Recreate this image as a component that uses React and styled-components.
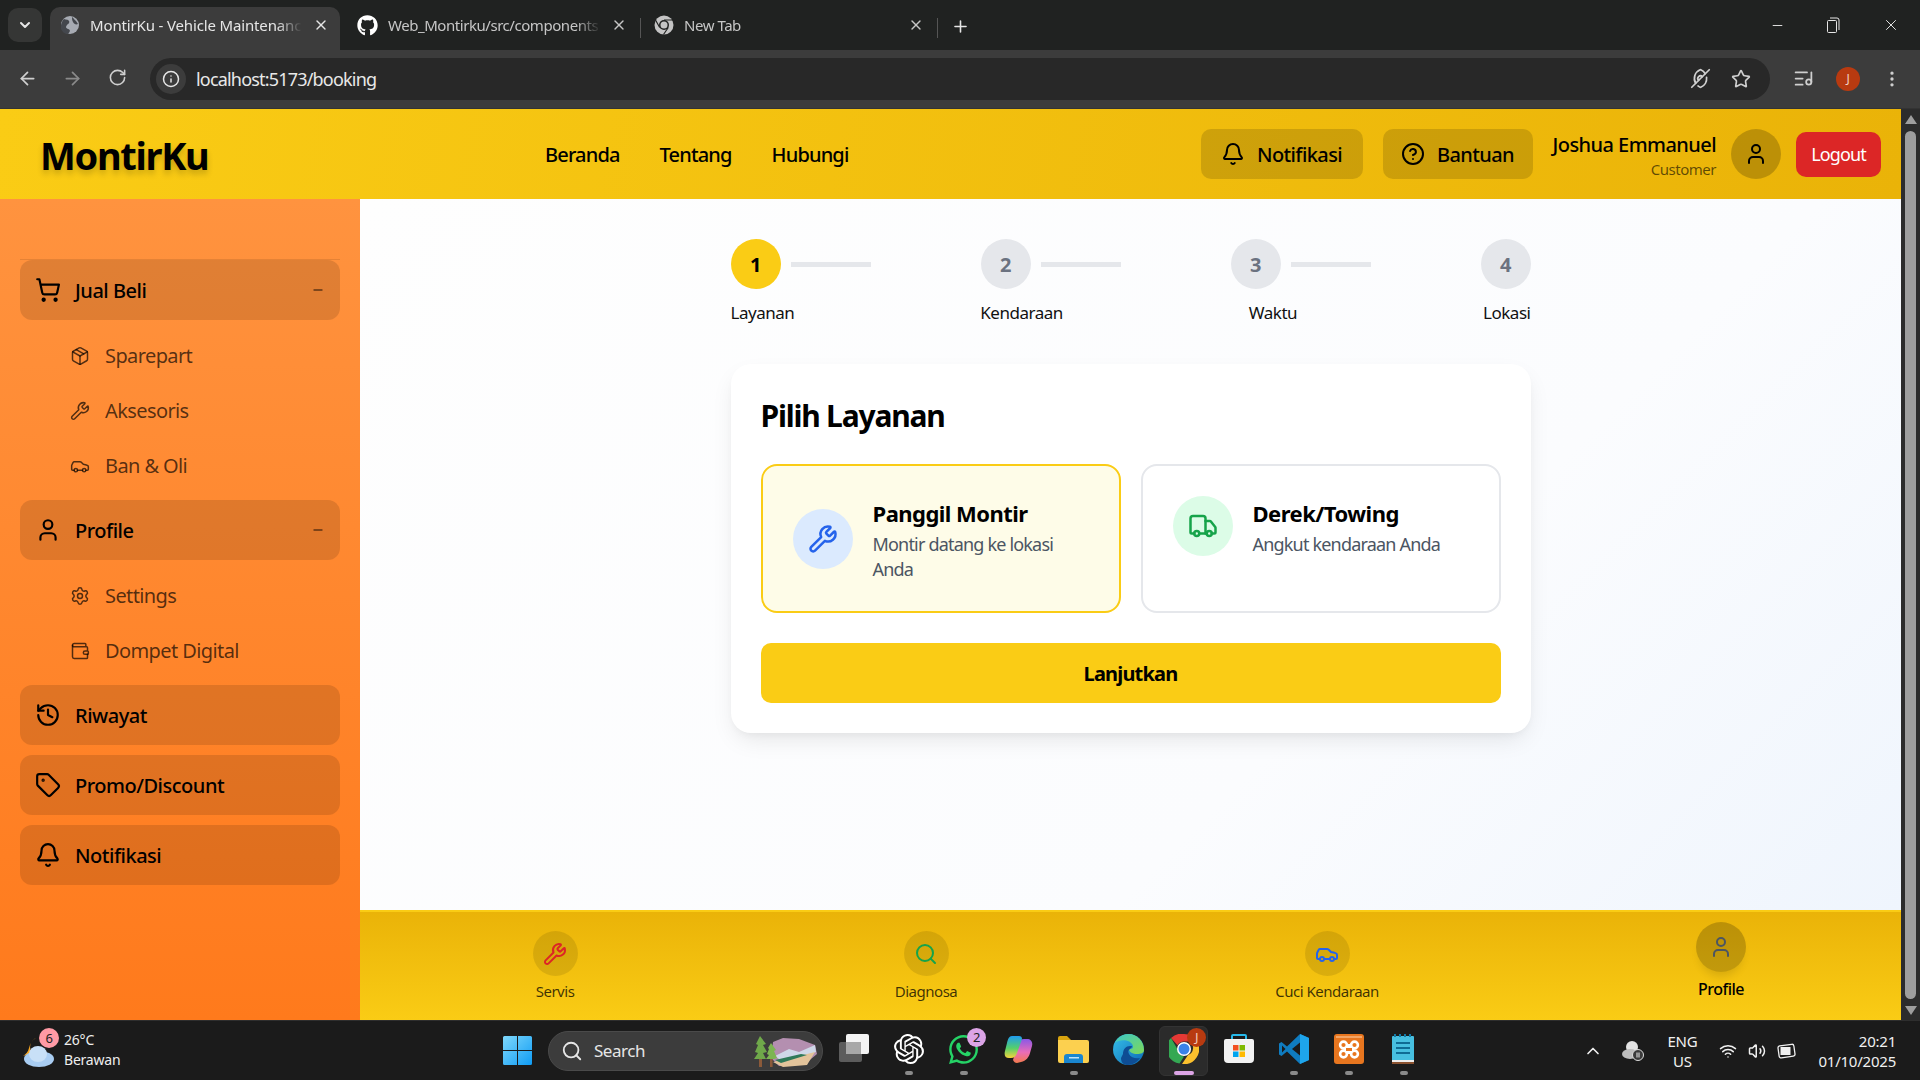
import React from "react";
import styled, { createGlobalStyle } from "styled-components";
import {
  ArrowLeft, ArrowRight, RotateCw, Info, Star, ChevronDown, X, Plus, Minus, EllipsisVertical, ListMusic, EyeOff,
  Bell, CircleHelp, User, ShoppingCart, Package, Wrench, Car, Settings, Wallet, History, Tag, Truck, Search, ChevronUp, Wifi, Volume2,
} from "lucide-react";
import { FaGithub, FaWhatsapp } from "react-icons/fa";
import { SiOpenai } from "react-icons/si";

const FONT = `"Noto Sans", "Open Sans", "Liberation Sans", sans-serif`;

const Global = createGlobalStyle`
  html, body { margin: 0; padding: 0; background: #1c1c1c; overflow: hidden; }
  * { box-sizing: border-box; }
  body { font-family: ${FONT}; }
`;

const Screen = styled.div`
  width: 1920px; height: 1080px; display: flex; flex-direction: column; overflow: hidden; letter-spacing: -0.03em;
`;

/* ---------- browser chrome ---------- */
const TabStrip = styled.div`
  height: 50px; background: #202221; display: flex; align-items: flex-end; padding-left: 8px; position: relative; flex: none;
`;
const TabSearch = styled.div`
  width: 34px; height: 34px; margin-bottom: 8px; border-radius: 10px; background: #353635; color: #e6e6e6;
  display: flex; align-items: center; justify-content: center; margin-right: 8px; flex: none;
`;
const Tab = styled.div`
  width: 290px; height: 43px; padding: 0 11px 7px ${p => (p.$active ? 11 : 9)}px; display: flex; align-items: center; gap: ${p => (p.$active ? 11 : 10)}px; flex: none;
  color: ${p => (p.$active ? "#e6e6e6" : "#c6c6c6")};
  background: ${p => (p.$active ? "#3c3c3c" : "transparent")};
  letter-spacing: ${p => (p.$active ? "-0.01em" : "-0.03em")};
  border-radius: 10px 10px 0 0; font-size: 15px; margin-right: 8px;
`;
const TabTitle = styled.span`
  flex: 1; overflow: hidden; white-space: nowrap;
  mask-image: linear-gradient(to right, #000 88%, transparent 100%);
`;
const TabSep = styled.div`width: 1px; height: 20px; background: #555; margin: 0 4px 12px -6px; flex: none;`;
const NewTab = styled.div`margin: 0 0 14px 9px; color: #e6e6e6; display: flex; flex: none;`;
const WindowControls = styled.div`
  margin-left: auto; display: flex; align-items: center; color: #e6e6e6; height: 50px; flex: none; padding-right: 20px; gap: 42px; align-self: flex-start;
`;
const Toolbar = styled.div`
  height: 59px; background: #3c3c3c; display: flex; align-items: center; flex: none; border-bottom: 1px solid #333; padding-bottom: 1px;
`;
const NavBtn = styled.div`
  width: 45px; display: flex; justify-content: center; color: ${p => (p.$dim ? "#8a8a8a" : "#cfcfcf")}; flex: none;
`;
const NavBtns = styled.div`display: flex; padding-left: 5px; width: 150px; flex: none;`;
const AddressBar = styled.div`
  width: 1620px; height: 42px; background: #282828; border-radius: 21px; display: flex; align-items: center; padding: 0 12px 0 6px; flex: none;
`;
const InfoChip = styled.div`
  width: 30px; height: 30px; border-radius: 50%; background: #3c3c3c; color: #e6e6e6; display: flex; align-items: center; justify-content: center; margin-right: 10px;
`;
const Url = styled.span`color: #e8e8e8; font-size: 18px; letter-spacing: -0.045em;`;
const AddrIcons = styled.div`margin-left: auto; display: flex; gap: 20px; color: #cfcfcf; align-items: center; padding-right: 7px;`;
const PrivacyIcon = styled(EyeOff)`transform: rotate(90deg);`;
const ToolRight = styled.div`flex: 1; display: flex; align-items: center; color: #cfcfcf; padding-left: 23px; gap: 22px;`;
const ProfileChip = styled.div`
  width: 24px; height: 24px; border-radius: 50%; background: #b83a10; color: #f3d5c8; font-size: 12px; display: flex; align-items: center; justify-content: center;
`;

/* ---------- page ---------- */
const PageRow = styled.div`flex: 1; display: flex; min-height: 0;`;
const Viewport = styled.div`flex: 1; display: flex; flex-direction: column; min-width: 0;`;
const Scrollbar = styled.div`
  width: 19px; background: #2c2c2c; display: flex; flex-direction: column; align-items: center; padding: 6px 0 5px; flex: none;
`;
const ScrollThumb = styled.div`flex: 1; width: 11px; border-radius: 6px; background: #9e9e9e; margin: 7px 0;`;
const ScrollArrow = styled.div`
  width: 0; height: 0; border-left: 6px solid transparent; border-right: 6px solid transparent;
  ${p => (p.$down ? "border-top: 9px solid #9e9e9e;" : "border-bottom: 9px solid #9e9e9e;")}
`;
const Header = styled.header`
  height: 90px; flex: none; background: linear-gradient(100deg, #facc15, #eab308); display: flex; align-items: center;
  padding: 0 20px 0 40px; color: #000;
`;
const Logo = styled.div`
  width: 505px; font-size: 38px; font-weight: 700; text-shadow: 0 4px 6px rgba(0,0,0,.2); flex: none; letter-spacing: -0.035em; padding-top: 2px;
`;
const TopNav = styled.nav`display: flex; gap: 40px; font-size: 20px; font-weight: 500; letter-spacing: -0.042em;`;
const HeaderRight = styled.div`margin-left: auto; display: flex; align-items: center;`;
const HeaderBtn = styled.div`
  width: ${p => p.$w}px; height: 50px; border-radius: 10px; background: rgba(0,0,0,.14); display: flex; align-items: center; justify-content: center; gap: 12px;
  font-size: 20px; font-weight: 500; margin-right: 20px; letter-spacing: -0.03em;
`;
const UserBox = styled.div`display: flex; flex-direction: column; align-items: flex-end; margin-right: 15px; padding-top: 3px;`;
const UserName = styled.div`font-size: 20px; font-weight: 500; line-height: 27px; letter-spacing: -0.028em;`;
const UserRole = styled.div`font-size: 15px; color: rgba(0,0,0,.6); line-height: 22px;`;
const Avatar = styled.div`
  width: 50px; height: 50px; border-radius: 50%; background: rgba(0,0,0,.2); display: flex; align-items: center; justify-content: center; margin-right: 15px;
`;
const LogoutBtn = styled.div`
  width: 85px; height: 45px; border-radius: 10px; background: #dc2626; color: #fff; font-size: 18px; display: flex; align-items: center; justify-content: center; letter-spacing: -0.05em;
`;
const Body = styled.div`flex: 1; display: flex; min-height: 0;`;
const Sidebar = styled.aside`
  width: 360px; flex: none; background: linear-gradient(180deg, #ff933f, #ff7a1c); padding: 60px 20px 0; color: #000;
`;
const SideList = styled.div`
  border-top: 1px solid rgba(0,0,0,.1); display: flex; flex-direction: column; gap: 10px;
`;
const SideItem = styled.div`
  height: 60px; border-radius: 12px; background: rgba(0,0,0,.12); display: flex; align-items: center; padding: 0 15px; gap: 14px;
  font-size: 20px; font-weight: 500;
`;
const SideLabel = styled.span`flex: 1;`;
const SubList = styled.div`padding-top: 8px; margin-bottom: -3px;`;
const SubItem = styled.div`
  height: 55px; padding-left: 50px; display: flex; align-items: center; gap: 15px; font-size: 20px; color: rgba(0,0,0,.68);
  letter-spacing: -0.03em;
`;
const MainCol = styled.div`flex: 1; display: flex; flex-direction: column; min-width: 0;`;
const Content = styled.main`
  flex: 1; background: linear-gradient(135deg, #fefefe 0%, #fbfcfe 65%, #eff5fd 100%); padding: 40px 0 0; display: flex; flex-direction: column; align-items: center;
`;
const Wizard = styled.div`width: 800px;`;
const Steps = styled.div`display: flex; justify-content: space-between;`;
const Step = styled.div`display: flex; align-items: center; gap: 10px;`;
const StepDot = styled.div`
  width: 50px; height: 50px; border-radius: 50%; font-size: 20px; font-weight: 700; display: flex; align-items: center; justify-content: center;
  background: ${p => (p.$active ? "#facc15" : "#e5e7eb")}; color: ${p => (p.$active ? "#000" : "#6b7280")};
`;
const StepLine = styled.div`width: 80px; height: 5px; background: #e5e7eb;`;
const StepLabels = styled.div`display: flex; justify-content: space-between; margin-top: 11px; font-size: 17px; color: #111; line-height: 25px; margin-bottom: 39px;`;
const Card = styled.section`
  background: #fff; border-radius: 20px; padding: 30px; box-shadow: 0 10px 25px -5px rgba(0,0,0,.1), 0 4px 10px -4px rgba(0,0,0,.06);
`;
const CardTitle = styled.h2`margin: 0 0 26px; font-size: 30px; line-height: 44px; font-weight: 700; color: #000; letter-spacing: -0.04em;`;
const Options = styled.div`display: grid; grid-template-columns: 1fr 1fr; gap: 20px;`;
const Option = styled.div`
  border: 2px solid ${p => (p.$selected ? "#facc15" : "#e5e7eb")}; background: ${p => (p.$selected ? "#fefce8" : "#fff")};
  border-radius: 16px; padding: 30px 30px 29px; display: flex; gap: 20px; align-items: ${p => (p.$selected ? "center" : "flex-start")};
`;
const OptionIcon = styled.div`
  width: 60px; height: 60px; border-radius: 50%; background: ${p => p.$bg}; color: ${p => p.$fg}; display: flex; align-items: center; justify-content: center; flex: none;
`;
const OptionTitle = styled.div`font-size: 22px; font-weight: 700; line-height: 35px; color: #000; letter-spacing: -0.024em;`;
const OptionDesc = styled.div`font-size: 18px; line-height: 25px; margin-top: 1px; color: #4b5563; max-width: ${p => p.$max || "none"}; letter-spacing: -0.045em;`;
const NextBtn = styled.div`
  margin-top: 30px; height: 60px; border-radius: 10px; background: #facc15; font-size: 20px; font-weight: 700; display: flex; align-items: center; justify-content: center; color: #000; letter-spacing: -0.04em;
`;
const BottomNav = styled.nav`
  height: 110px; flex: none; background: linear-gradient(180deg, #eab308, #facc15); border-top: 2px solid #facc15;
  display: flex; gap: 317px; padding-left: 175px; align-items: flex-start;
`;
const BottomItem = styled.div`
  width: ${p => p.$w}px; display: flex; flex-direction: column; align-items: center; padding-top: ${p => (p.$active ? 10 : 19)}px; flex: none;
`;
const BottomCircle = styled.div`
  width: ${p => (p.$active ? 50 : 45)}px; height: ${p => (p.$active ? 50 : 45)}px; border-radius: 50%;
  background: rgba(0,0,0,${p => (p.$active ? ".2" : ".1")}); color: ${p => p.$fg}; display: flex; align-items: center; justify-content: center; flex: none;
  ${p => p.$active && "box-shadow: 0 8px 10px -4px rgba(0,0,0,.12);"}
`;
const BottomLabel = styled.div`
  margin-top: ${p => (p.$active ? 6 : 4)}px; white-space: nowrap; line-height: 22px;
  font-size: ${p => (p.$active ? 16 : 15)}px; font-weight: ${p => (p.$active ? 500 : 400)}; color: ${p => (p.$active ? "#000" : "rgba(0,0,0,.75)")};
`;

/* ---------- taskbar ---------- */
const Taskbar = styled.footer`
  height: 60px; flex: none; background: #1b1b1b; border-top: 1px solid #2e2e2e; display: flex; align-items: center; color: #fff;
`;
const Weather = styled.div`width: 503px; height: 100%; flex: none; display: flex; align-items: center; padding-left: 22px; position: relative;`;
const WeatherBadge = styled.div`
  position: absolute; left: 39px; top: 7px; width: 20px; height: 20px; border-radius: 50%; background: #ff9aa5; color: #222; font-size: 13px;
  display: flex; align-items: center; justify-content: center;
`;
const WeatherText = styled.div`margin-left: 9px; font-size: 14px; line-height: 20px; color: #eee; letter-spacing: -0.015em; padding-bottom: 1px;`;
const WinIcon = styled.div`width: 45px; flex: none; display: flex;`;
const SearchPill = styled.div`
  width: 275px; height: 40px; border-radius: 20px; background: #3c3c3c; border: 1px solid #4a4a4a; display: flex; align-items: center; padding: 0 3px 0 12px; color: #e6e6e6; font-size: 17px; gap: 11px; flex: none;
`;
const PillArt = styled.div`margin-left: auto; display: flex;`;
const TaskIcons = styled.div`display: flex; margin-left: 3px; flex: none;`;
const TaskIcon = styled.div`
  width: 55px; height: 60px; display: flex; align-items: center; justify-content: center; position: relative; flex: none;
  padding-bottom: 3px;
  &::before {
    ${p => p.$active && `content: ""; position: absolute; left: 3px; right: 3px; top: 5px; bottom: 5px; background: #2b2b2b; border-radius: 6px; border: 1px solid #333;`}
  }
  &::after {
    ${p => p.$running && `content: ""; position: absolute; bottom: 6px; left: 50%; transform: translateX(-50%); border-radius: 2px;
    height: 4px; width: ${p.$active ? 20 : 8}px; background: ${p.$active ? "#dca4e6" : "#8a8a8a"};`}
  }
  > * { position: relative; z-index: 1; }
`;
const IconBadge = styled.div`
  position: absolute; top: 7px; right: ${p => p.$right}px; width: 19px; height: 19px; border-radius: 50%; background: ${p => p.$bg}; color: ${p => p.$fg};
  font-size: 13px; display: flex; align-items: center; justify-content: center; z-index: 2;
`;
const Tray = styled.div`margin-left: auto; display: flex; align-items: center; padding-right: 24px; color: #f0f0f0;`;
const TrayBlock = styled.div`
  display: flex; flex-direction: column; align-items: ${p => p.$align || "center"}; font-size: 15px; line-height: 20px; margin-left: ${p => p.$ml}px; letter-spacing: -0.015em;
`;
const TrayIcons = styled.div`display: flex; align-items: center; gap: 11px; margin-left: ${p => p.$ml}px;`;

const Bars = () => (
  <svg width="29" height="29" viewBox="0 0 29 29">
    <defs><linearGradient id="wn" x1="0" y1="0" x2="1" y2="1"><stop offset="0" stopColor="#7fd8fb" /><stop offset="1" stopColor="#0f9cf5" /></linearGradient></defs>
    <path fill="url(#wn)" d="M0 1.5A1.5 1.5 0 0 1 1.5 0H14v14H0zM15 0h12.5A1.5 1.5 0 0 1 29 1.5V14H15zM0 15h14v14H1.5A1.5 1.5 0 0 1 0 27.5zM15 15h14v12.5a1.5 1.5 0 0 1-1.5 1.5H15z" />
  </svg>
);
const Landscape = () => (
  <svg width="66" height="34" viewBox="0 0 66 34">
    <path d="M20 8 L30 4 L46 5 L62 11 L64 20 L52 30 L26 32 L18 24Z" fill="#b48fb0" />
    <path d="M22 22 L36 15 L46 18 L62 11 L63 18 L50 23 L30 28Z" fill="#cfd8e8" />
    <path d="M20 28 L50 21 L62 18 L54 31 L30 33Z" fill="#e3c49b" />
    <path d="M22 26 L48 20 L54 21 L28 29Z" fill="#2f7a59" />
    <rect x="6" y="6" width="3" height="27" fill="#8b5a3a" /><rect x="17" y="12" width="2.6" height="21" fill="#8b5a3a" />
    <path d="M7 2l6 8-3 1 4 7-4 1 3 6H1l4-6-3-1 3-7-2-1z" fill="#6fa84a" />
    <path d="M18 9l5 7-2 1 3 7-3 1H13l3-4-2-1 2-5-1-1z" fill="#7db552" />
  </svg>
);
const TaskView = () => (
  <svg width="30" height="30" viewBox="0 0 30 30">
    <rect x="0" y="8" width="23" height="20" rx="2" fill="#5c5c5c" />
    <rect x="7" y="0" width="23" height="20" rx="2" fill="#f4f4f4" />
    <rect x="7" y="8" width="15" height="12" fill="#a8a8a8" />
  </svg>
);
const Copilot = () => (
  <svg width="29" height="29" viewBox="0 0 29 29">
    <defs>
      <linearGradient id="c1" x1="0" y1="0" x2="0" y2="1"><stop offset="0" stopColor="#1f9cf0" /><stop offset=".55" stopColor="#55d06a" /><stop offset="1" stopColor="#f5d33c" /></linearGradient>
      <linearGradient id="c2" x1="0" y1="0" x2="0" y2="1"><stop offset="0" stopColor="#8a58e6" /><stop offset=".55" stopColor="#e86db8" /><stop offset="1" stopColor="#f47a4c" /></linearGradient>
    </defs>
    <path fill="url(#c2)" d="M14 9c1-3 3-5 6-5h3c4 0 6 3 5 7l-2 7c-1 4-4 8-9 9l-4 1c-2 0-3-1-4-3z" />
    <path fill="url(#c1)" d="M8 1h7c2 0 3 1 3 3l-5 14c-1 3-3 5-6 5H5c-4 0-5-3-4-7l2-8C4 4 5 1 8 1z" />
  </svg>
);
const Folder = () => (
  <svg width="31" height="28" viewBox="0 0 31 28">
    <path d="M0 3a2 2 0 0 1 2-2h7l4 4v4H0z" fill="#d9a40f" />
    <path d="M0 5h29a2 2 0 0 1 2 2v19a2 2 0 0 1-2 2H2a2 2 0 0 1-2-2z" fill="#fcd04f" />
    <path d="M5 28v-6a3 3 0 0 1 3-3h13a3 3 0 0 1 3 3v6z" fill="#1a86d0" transform="translate(1 0)" />
    <rect x="11" y="22" width="10" height="1.5" fill="#bfe3fa" />
  </svg>
);
const Edge = () => (
  <svg width="31" height="31" viewBox="0 0 31 31">
    <defs>
      <linearGradient id="e1" x1="0" y1="0" x2="1" y2="1"><stop offset="0" stopColor="#37c1ea" /><stop offset="1" stopColor="#0c6ab5" /></linearGradient>
      <linearGradient id="e2" x1="0" y1="0" x2="1" y2="1"><stop offset="0" stopColor="#3cc8c8" /><stop offset="1" stopColor="#7ed957" /></linearGradient>
    </defs>
    <circle cx="15.500" cy="15.500" r="15.500" fill="url(#e1)" />
    <path d="M31 16c0-9-7-16-15.500-16C9 0 4 4 2 9c4-4 16-4 18 3 .5 2-1 3-3 3h-1c0 3 4 5 8 5 4 0 7-1 7-4z" fill="url(#e2)" />
    <path d="M10 20c0-5 3-8 7-8s1 2 0 3c-2 1-2 3-1 5 2 4 7 5 11 4-3 4-7 7-12 7-4 0-7-2-7-7z" fill="#0e4d94" />
  </svg>
);
const Chrome = () => (
  <svg width="30" height="30" viewBox="0 0 30 30">
    <path d="M15 0a15 15 0 0 1 13 7.500H15a7.500 7.500 0 0 0-6.500 3.750L2 3.950A15 15 0 0 1 15 0z" fill="#e53935" />
    <path d="M2 4l6.500 11.250a7.500 7.500 0 0 0 6.500 7.250L10.500 29.500A15 15 0 0 1 2 4z" fill="#34a853" />
    <path d="M28 7.500A15 15 0 0 1 13 30l6-9a7.500 7.500 0 0 0 1.500-13.500z" fill="#fbc02d" />
    <circle cx="15" cy="15" r="7" fill="#fff" />
    <circle cx="15" cy="15" r="5.500" fill="#3b82e8" />
  </svg>
);
const Store = () => (
  <svg width="30" height="30" viewBox="0 0 30 30">
    <path d="M8 6V2a1 1 0 0 1 1-1h12a1 1 0 0 1 1 1v4" fill="none" stroke="#27b9ea" strokeWidth="2" />
    <path d="M0 7a2 2 0 0 1 2-2h26a2 2 0 0 1 2 2v18a4 4 0 0 1-4 4H4a4 4 0 0 1-4-4z" fill="#f2f2f2" />
    <rect x="9" y="11" width="5.500" height="5.500" fill="#f25022" /><rect x="15.500" y="11" width="5.500" height="5.500" fill="#7fba00" />
    <rect x="9" y="17.500" width="5.500" height="5.500" fill="#00a4ef" /><rect x="15.500" y="17.500" width="5.500" height="5.500" fill="#ffb900" />
  </svg>
);
const VSCode = () => (
  <svg width="30" height="30" viewBox="0 0 30 30">
    <path d="M21 0l9 4v22l-9 4-13-12.500L2.500 22 0 20.500V9.500L2.500 8 8 12.500z" fill="#0f7cc0" />
    <path d="M21 0l9 4v22l-9 4z" fill="#1ea5ec" />
    <path d="M21 8.500L13 15l8 6.500z" fill="#1b1b1b" />
    <path d="M3 11.500L6.500 15 3 18.500z" fill="#1b1b1b" />
  </svg>
);
const Xampp = () => (
  <svg width="30" height="30" viewBox="0 0 30 30">
    <rect width="30" height="30" rx="3" fill="#e8761f" />
    <rect x="2" y="2" width="26" height="2" fill="#f3a566" />
    <rect x="10" y="10" width="10" height="10" fill="#fff" />
    <g fill="#e8761f" stroke="#fff" strokeWidth="2.600">
      <circle cx="9.500" cy="11" r="3.400" /><circle cx="20.500" cy="11" r="3.400" />
      <circle cx="9.500" cy="20" r="3.400" /><circle cx="20.500" cy="20" r="3.400" />
    </g>
    <rect x="12" y="14" width="6" height="3" fill="#e8761f" />
  </svg>
);
const Notepad = () => (
  <svg width="24" height="30" viewBox="0 0 24 30">
    <rect x="0" y="2" width="22" height="28" rx="1" fill="#47bfe0" />
    <rect x="0" y="26" width="22" height="2.500" fill="#eee" /><rect x="0" y="28" width="22" height="2" fill="#8a5230" />
    <path d="M2 0h2v3H2zM7 0h2v3H7zM12 0h2v3h-2zM17 0h2v3h-2z" fill="#127aa6" />
    <rect x="4" y="8" width="14" height="2" fill="#0f6b94" /><rect x="4" y="13" width="14" height="2" fill="#0f6b94" /><rect x="4" y="18" width="14" height="2" fill="#0f6b94" />
  </svg>
);
const WeatherArt = () => (
  <svg width="33" height="36" viewBox="0 0 33 36">
    <path d="M14 5a10 10 0 0 0-4 15l-9 3c3-2 5-4 6-8 1-4 3-8 7-10z" fill="#f6a623" />
    <ellipse cx="17" cy="26" rx="15" ry="8" fill="#a9cdf2" />
    <ellipse cx="16" cy="21" rx="9" ry="8" fill="#c8e0f7" />
  </svg>
);
const TabGlobe = () => (
  <svg width="18" height="18" viewBox="0 0 18 18">
    <circle cx="9" cy="9" r="9" fill="#a7abb3" />
    <path d="M3 3c2 1 4 0 5 2s-1 3-2 4-2 3 1 4 2 3 0 5c-3 0-6-2-7-5S1 5 3 3zM11 1c2 1 2 3 4 4l2 3c-2 1-4 0-5-2s-1-3-1-5z" fill="#44474d" />
  </svg>
);
const ChromeMono = () => (
  <svg width="20" height="20" viewBox="0 0 20 20">
    <circle cx="10" cy="10" r="9.500" fill="#c4c4c4" />
    <circle cx="10" cy="10" r="5" fill="#202221" />
    <circle cx="10" cy="10" r="3.500" fill="#c4c4c4" />
    <path d="M10 5h9M5.700 12.500L1.500 5M14.300 12.500L9.500 19.500" stroke="#202221" strokeWidth="1.200" />
  </svg>
);
const Restore = () => (
  <svg width="13" height="17" viewBox="0 0 13 17" fill="none" stroke="#e6e6e6" strokeWidth="1">
    <rect x=".5" y="3.500" width="9" height="12" rx="1" /><path d="M3 1h7a2 2 0 0 1 2 2v10" />
  </svg>
);
const Battery = () => (
  <svg width="20" height="20" viewBox="0 0 20 20" fill="none" stroke="#f0f0f0" strokeWidth="1.300">
    <rect x="1.500" y="4" width="16" height="12" rx="2" transform="rotate(-8 10 10)" /><rect x="3.500" y="6" width="10" height="8" fill="#f0f0f0" stroke="none" />
  </svg>
);
const CloudTray = () => (
  <svg width="22" height="22" viewBox="0 0 22 22">
    <circle cx="10" cy="7" r="6" fill="#e3e3e3" /><ellipse cx="8" cy="14" rx="8" ry="5" fill="#bdbdbd" />
    <circle cx="16" cy="15" r="5.500" fill="#3a3a3a" stroke="#ddd" strokeWidth="1" /><rect x="14.500" y="12.500" width="1" height="5" fill="#eee" /><rect x="16.500" y="12.500" width="1" height="5" fill="#eee" />
  </svg>
);

const subIcon = { size: 20, strokeWidth: 1.8 };
const mainIcon = { size: 26, strokeWidth: 2 };

export default function App() {
  return (
    <Screen>
      <Global />
      <TabStrip>
        <TabSearch><ChevronDown size={16} strokeWidth={3} /></TabSearch>
        <Tab $active>
          <TabGlobe />
          <TabTitle>MontirKu - Vehicle Maintenance</TabTitle>
          <X size={16} />
        </Tab>
        <Tab>
          <FaGithub size={21} color="#fff" />
          <TabTitle>Web_Montirku/src/components</TabTitle>
          <X size={16} />
        </Tab>
        <TabSep />
        <Tab>
          <ChromeMono />
          <TabTitle>New Tab</TabTitle>
          <X size={16} />
        </Tab>
        <TabSep />
        <NewTab><Plus size={19} /></NewTab>
        <WindowControls>
          <Minus size={15} strokeWidth={1.500} />
          <Restore />
          <X size={18} strokeWidth={1.300} />
        </WindowControls>
      </TabStrip>
      <Toolbar>
        <NavBtns>
          <NavBtn><ArrowLeft size={21} /></NavBtn>
          <NavBtn $dim><ArrowRight size={21} /></NavBtn>
          <NavBtn><RotateCw size={19} /></NavBtn>
        </NavBtns>
        <AddressBar>
          <InfoChip><Info size={18} /></InfoChip>
          <Url>localhost:5173/booking</Url>
          <AddrIcons><PrivacyIcon size={21} /><Star size={20} /></AddrIcons>
        </AddressBar>
        <ToolRight>
          <ListMusic size={21} />
          <ProfileChip>J</ProfileChip>
          <EllipsisVertical size={20} />
        </ToolRight>
      </Toolbar>
      <PageRow>
        <Viewport>
          <Header>
            <Logo>MontirKu</Logo>
            <TopNav><span>Beranda</span><span>Tentang</span><span>Hubungi</span></TopNav>
            <HeaderRight>
              <HeaderBtn $w={162}><Bell size={24} />Notifikasi</HeaderBtn>
              <HeaderBtn $w={150}><CircleHelp size={24} />Bantuan</HeaderBtn>
              <UserBox><UserName>Joshua Emmanuel</UserName><UserRole>Customer</UserRole></UserBox>
              <Avatar><User size={24} /></Avatar>
              <LogoutBtn>Logout</LogoutBtn>
            </HeaderRight>
          </Header>
          <Body>
            <Sidebar>
              <SideList>
                <div>
                  <SideItem><ShoppingCart {...mainIcon} /><SideLabel>Jual Beli</SideLabel><Minus size={14} strokeWidth={1.500} /></SideItem>
                  <SubList>
                    <SubItem><Package {...subIcon} />Sparepart</SubItem>
                    <SubItem><Wrench {...subIcon} />Aksesoris</SubItem>
                    <SubItem><Car {...subIcon} />Ban &amp; Oli</SubItem>
                  </SubList>
                </div>
                <div>
                  <SideItem><User {...mainIcon} /><SideLabel>Profile</SideLabel><Minus size={14} strokeWidth={1.500} /></SideItem>
                  <SubList>
                    <SubItem><Settings {...subIcon} />Settings</SubItem>
                    <SubItem><Wallet {...subIcon} />Dompet Digital</SubItem>
                  </SubList>
                </div>
                <SideItem><History {...mainIcon} /><SideLabel>Riwayat</SideLabel></SideItem>
                <SideItem><Tag {...mainIcon} /><SideLabel>Promo/Discount</SideLabel></SideItem>
                <SideItem><Bell {...mainIcon} /><SideLabel>Notifikasi</SideLabel></SideItem>
              </SideList>
            </Sidebar>
            <MainCol>
              <Content>
                <Wizard>
                  <Steps>
                    <Step><StepDot $active>1</StepDot><StepLine /></Step>
                    <Step><StepDot>2</StepDot><StepLine /></Step>
                    <Step><StepDot>3</StepDot><StepLine /></Step>
                    <Step><StepDot>4</StepDot></Step>
                  </Steps>
                  <StepLabels><span>Layanan</span><span>Kendaraan</span><span>Waktu</span><span>Lokasi</span></StepLabels>
                  <Card>
                    <CardTitle>Pilih Layanan</CardTitle>
                    <Options>
                      <Option $selected>
                        <OptionIcon $bg="#dbeafe" $fg="#2563eb"><Wrench size={30} /></OptionIcon>
                        <div><OptionTitle>Panggil Montir</OptionTitle><OptionDesc $max="200px">Montir datang ke lokasi Anda</OptionDesc></div>
                      </Option>
                      <Option>
                        <OptionIcon $bg="#dcfce7" $fg="#16a34a"><Truck size={30} /></OptionIcon>
                        <div><OptionTitle>Derek/Towing</OptionTitle><OptionDesc>Angkut kendaraan Anda</OptionDesc></div>
                      </Option>
                    </Options>
                    <NextBtn>Lanjutkan</NextBtn>
                  </Card>
                </Wizard>
              </Content>
              <BottomNav>
                <BottomItem $w={40}><BottomCircle $fg="#dc2626"><Wrench size={24} /></BottomCircle><BottomLabel>Servis</BottomLabel></BottomItem>
                <BottomItem $w={68}><BottomCircle $fg="#16a34a"><Search size={24} /></BottomCircle><BottomLabel>Diagnosa</BottomLabel></BottomItem>
                <BottomItem $w={100}><BottomCircle $fg="#2563eb"><Car size={24} /></BottomCircle><BottomLabel>Cuci Kendaraan</BottomLabel></BottomItem>
                <BottomItem $w={54} $active><BottomCircle $active $fg="#4b5563"><User size={24} /></BottomCircle><BottomLabel $active>Profile</BottomLabel></BottomItem>
              </BottomNav>
            </MainCol>
          </Body>
        </Viewport>
        <Scrollbar><ScrollArrow /><ScrollThumb /><ScrollArrow $down /></Scrollbar>
      </PageRow>
      <Taskbar>
        <Weather>
          <WeatherArt />
          <WeatherBadge>6</WeatherBadge>
          <WeatherText><div>26°C</div><div>Berawan</div></WeatherText>
        </Weather>
        <WinIcon><Bars /></WinIcon>
        <SearchPill><Search size={22} /><span>Search</span><PillArt><Landscape /></PillArt></SearchPill>
        <TaskIcons>
          <TaskIcon><TaskView /></TaskIcon>
          <TaskIcon $running><SiOpenai size={30} color="#fff" /></TaskIcon>
          <TaskIcon $running><FaWhatsapp size={33} color="#25d366" /><IconBadge $right={5} $bg="#dca4e6" $fg="#222">2</IconBadge></TaskIcon>
          <TaskIcon><Copilot /></TaskIcon>
          <TaskIcon $running><Folder /></TaskIcon>
          <TaskIcon><Edge /></TaskIcon>
          <TaskIcon $running $active><Chrome /><IconBadge $right={5} $bg="#b83a10" $fg="#f3c8b8">J</IconBadge></TaskIcon>
          <TaskIcon><Store /></TaskIcon>
          <TaskIcon $running><VSCode /></TaskIcon>
          <TaskIcon $running><Xampp /></TaskIcon>
          <TaskIcon $running><Notepad /></TaskIcon>
        </TaskIcons>
        <Tray>
          <ChevronUp size={20} />
          <TrayIcons $ml={19}><CloudTray /></TrayIcons>
          <TrayBlock $ml={23}><span>ENG</span><span>US</span></TrayBlock>
          <TrayIcons $ml={22}><Wifi size={18} /><Volume2 size={18} /><Battery /></TrayIcons>
          <TrayBlock $align="flex-end" $ml={21}><span>20:21</span><span>01/10/2025</span></TrayBlock>
        </Tray>
      </Taskbar>
    </Screen>
  );
}
